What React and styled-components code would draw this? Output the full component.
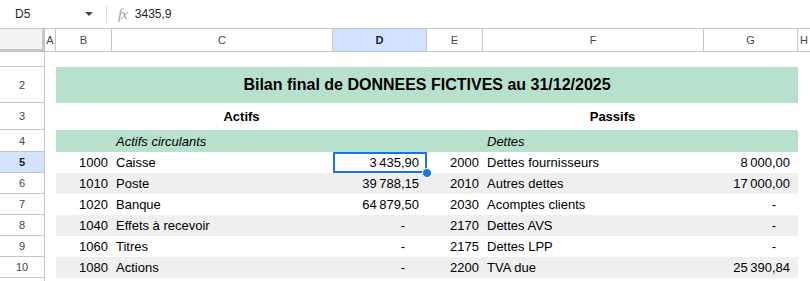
import styled, { createGlobalStyle } from 'styled-components';

const GlobalStyle = createGlobalStyle`
  body {
    margin: 0;
    background: #fff;
    font-family: 'Liberation Sans', Arial, sans-serif;
    overflow: hidden;
  }
`;

const FormulaBar = styled.div`
  height: 28px;
  display: flex;
  align-items: center;
  font-size: 12px;
  color: #1f1f1f;
`;

const NameBox = styled.div`
  width: 106px;
  display: flex;
  align-items: center;
  justify-content: space-between;
  padding: 0 13px 0 15px;
  box-sizing: border-box;
`;

const Caret = styled.span`
  width: 0;
  height: 0;
  border-left: 4px solid transparent;
  border-right: 4px solid transparent;
  border-top: 4px solid #444746;
`;

const Divider = styled.span`
  width: 1px;
  height: 17px;
  background: #dadce0;
`;

const Fx = styled.span`
  font-family: 'Liberation Serif', serif;
  font-style: italic;
  font-size: 15px;
  color: #a0a4a8;
  margin: 0 8px 0 11px;
  letter-spacing: -1px;
`;

const Sheet = styled.div`
  display: grid;
  grid-template-columns: 45px 11px 56px 221px 94px 56px 221px 94px 12px;
  grid-template-rows: 24px 15px 36px 27px 22px repeat(7, 21px);
`;

const Corner = styled.div`
  background: #f1f3f4;
  border-top: 1px solid #c4c7c5;
  border-right: 3px solid #c4c7c5;
  border-bottom: 3px solid #c4c7c5;
  box-sizing: border-box;
`;

const ColHead = styled.div`
  display: flex;
  align-items: center;
  justify-content: center;
  font-size: 11px;
  border-top: 1px solid #c4c7c5;
  border-bottom: 1px solid #c4c7c5;
  border-right: ${p => (p.$last ? 'none' : '1px solid #c4c7c5')};
  background: ${p => (p.$active ? '#d3e3fd' : '#fff')};
  color: ${p => (p.$active ? '#0b1f4d' : '#444746')};
  font-weight: ${p => (p.$active ? 'bold' : 'normal')};
  box-sizing: border-box;
`;

const RowHead = styled.div`
  display: flex;
  align-items: center;
  justify-content: center;
  font-size: 11px;
  border-right: 1px solid #c4c7c5;
  border-bottom: 1px solid #c4c7c5;
  background: ${p => (p.$active ? '#d3e3fd' : '#fff')};
  color: ${p => (p.$active ? '#0b1f4d' : '#444746')};
  font-weight: ${p => (p.$active ? 'bold' : 'normal')};
  box-sizing: border-box;
`;

const Cell = styled.div`
  grid-column: span ${p => p.$span || 1};
  display: flex;
  align-items: center;
  justify-content: ${p => (p.$align === 'right' ? 'flex-end' : p.$align === 'center' ? 'center' : 'flex-start')};
  padding: ${p => (p.$align === 'right' ? '0 4px 0 0' : p.$align === 'center' ? '0' : '0 0 0 4px')};
  font-size: ${p => p.$size || 13}px;
  font-weight: ${p => (p.$bold ? 'bold' : 'normal')};
  font-style: ${p => (p.$italic ? 'italic' : 'normal')};
  background: ${p => p.$bg || 'transparent'};
  color: #000;
  white-space: nowrap;
  position: relative;
  box-sizing: border-box;
`;

const Amount = styled(Cell)`
  padding-right: 8px;
  ${p => p.$selected && `
    box-shadow: inset 0 0 0 2px #1a73e8;
    z-index: 2;
    &::after {
      content: '';
      position: absolute;
      right: -5px;
      bottom: -5px;
      width: 8px;
      height: 8px;
      border-radius: 50%;
      background: #1a73e8;
      border: 1px solid #fff;
    }
  `}
`;

const Dash = styled.span`
  margin-right: 14px;
`;

const GREEN = '#b7e1cd';
const BAND = '#efefef';
const NB = '\u202F';

const columns = ['A', 'B', 'C', 'D', 'E', 'F', 'G', 'H'];

const lines = [
  { row: 5, a: ['1000', 'Caisse', `3${NB}435,90`], p: ['2000', 'Dettes fournisseurs', `8${NB}000,00`] },
  { row: 6, a: ['1010', 'Poste', `39${NB}788,15`], p: ['2010', 'Autres dettes', `17${NB}000,00`] },
  { row: 7, a: ['1020', 'Banque', `64${NB}879,50`], p: ['2030', 'Acomptes clients', null] },
  { row: 8, a: ['1040', 'Effets à recevoir', null], p: ['2170', 'Dettes AVS', null] },
  { row: 9, a: ['1060', 'Titres', null], p: ['2175', 'Dettes LPP', null] },
  { row: 10, a: ['1080', 'Actions', null], p: ['2200', 'TVA due', `25${NB}390,84`] },
];

function Side({ data, bg, selected }) {
  const [code, label, value] = data;
  return (
    <>
      <Cell $align="right" $bg={bg}>{code}</Cell>
      <Cell $bg={bg}>{label}</Cell>
      <Amount $align="right" $bg={bg} $selected={selected}>
        {value || <Dash>-</Dash>}
      </Amount>
    </>
  );
}

export default function App() {
  return (
    <>
      <GlobalStyle />
      <FormulaBar>
        <NameBox>
          <span>D5</span>
          <Caret />
        </NameBox>
        <Divider />
        <Fx>fx</Fx>
        <span>3435,9</span>
      </FormulaBar>
      <Sheet>
        <Corner />
        {columns.map((c, i) => (
          <ColHead key={c} $active={c === 'D'} $last={i === columns.length - 1}>{c}</ColHead>
        ))}

        <RowHead />
        <Cell $span={8} />

        <RowHead>2</RowHead>
        <Cell />
        <Cell $span={6} $align="center" $bold $size={16} $bg={GREEN}>
          Bilan final de DONNEES FICTIVES au 31/12/2025
        </Cell>
        <Cell />

        <RowHead>3</RowHead>
        <Cell />
        <Cell $span={3} $align="center" $bold>Actifs</Cell>
        <Cell $span={3} $align="center" $bold>Passifs</Cell>
        <Cell />

        <RowHead>4</RowHead>
        <Cell />
        <Cell $bg={GREEN} />
        <Cell $bg={GREEN} $italic>Actifs circulants</Cell>
        <Cell $bg={GREEN} />
        <Cell $bg={GREEN} />
        <Cell $bg={GREEN} $italic>Dettes</Cell>
        <Cell $bg={GREEN} />
        <Cell />

        {lines.map(l => {
          const bg = l.row % 2 === 0 ? BAND : undefined;
          return (
            <div key={l.row} style={{ display: 'contents' }}>
              <RowHead $active={l.row === 5}>{l.row}</RowHead>
              <Cell />
              <Side data={l.a} bg={bg} selected={l.row === 5} />
              <Side data={l.p} bg={bg} />
              <Cell />
            </div>
          );
        })}

        <RowHead />
        <Cell $span={8} />
      </Sheet>
    </>
  );
}
